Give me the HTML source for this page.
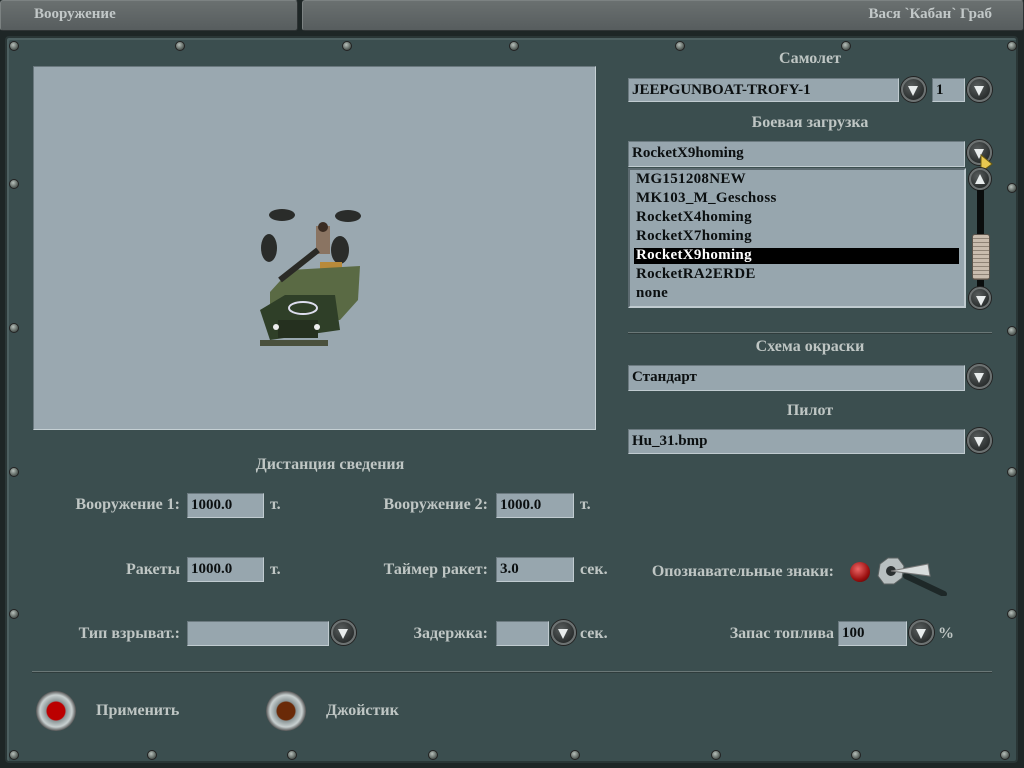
<!DOCTYPE html>
<html><head><meta charset="utf-8">
<style>
*{margin:0;padding:0;box-sizing:border-box}
body{width:1024px;height:768px;background:#1e2626;position:relative;overflow:hidden;font-family:"Liberation Serif","Noto Serif CJK SC",serif}
.a{position:absolute}
.tab{position:absolute;top:0;height:31px;background:linear-gradient(#6a7070,#575d5e);border:1px solid #7c8282;border-bottom-color:#2e3334;border-right-color:#2e3334;border-radius:3px}
.tt{color:#c2c8c8;font-size:15px;font-weight:bold;top:6px}
.panel{left:5px;top:36px;width:1013px;height:727px;background:#3b4e4f;border:2px solid #2a3636;border-radius:4px;box-shadow:inset 2px 2px 0 #4d6061}
.lbl{position:absolute;color:#bfc6c4;font-size:16px;font-weight:bold;white-space:nowrap}
.c{text-align:center;width:300px}
.inp{position:absolute;background:#97a6ae;border:1px solid #c0cbd0;border-top-color:#6c7a80;border-left-color:#6c7a80;color:#0b0f10;font-size:15px;font-weight:bold;padding:1px 3px;white-space:nowrap;line-height:20px}
.btn{position:absolute;width:25px;height:25px;border-radius:50%;background:radial-gradient(circle at 40% 35%,#5a5f5f,#2b2f2f 70%);border:2px solid #6d7272;box-shadow:0 0 0 1px #222}
.btn:after{content:"";position:absolute;left:5px;top:7px;border-left:5.5px solid transparent;border-right:5.5px solid transparent;border-top:10px solid #e8ecec}
.btn.up:after{border-top:none;border-bottom:10px solid #e8ecec;top:4px;left:4px}
.scr{position:absolute;width:10px;height:10px;border-radius:50%;background:radial-gradient(circle at 40% 35%,#b7c0bb,#5d6661 60%,#2f3633);border:1px solid #222}
.line{position:absolute;height:2px;background:#6a7777;border-bottom:1px solid #2f3c3c}
.li{position:absolute;left:636px;font-size:15px;font-weight:bold;color:#0b0f10;letter-spacing:.3px;line-height:19px}
</style></head><body>
<div class="tab" style="left:0;width:298px"></div>
<div class="tab" style="left:302px;width:722px"></div>
<div class="a tt" style="left:34px">Вооружение</div>
<div class="a tt" style="right:32px">Вася `Кабан` Граб</div>

<div class="a panel"></div>
<div class="scr" style="left:9px;top:41px"></div>
<div class="scr" style="left:175px;top:41px"></div>
<div class="scr" style="left:342px;top:41px"></div>
<div class="scr" style="left:509px;top:41px"></div>
<div class="scr" style="left:675px;top:41px"></div>
<div class="scr" style="left:841px;top:41px"></div>
<div class="scr" style="left:1007px;top:41px"></div>
<div class="scr" style="left:9px;top:179px"></div>
<div class="scr" style="left:9px;top:323px"></div>
<div class="scr" style="left:9px;top:467px"></div>
<div class="scr" style="left:9px;top:609px"></div>
<div class="scr" style="left:1007px;top:183px"></div>
<div class="scr" style="left:1007px;top:326px"></div>
<div class="scr" style="left:1007px;top:467px"></div>
<div class="scr" style="left:1007px;top:609px"></div>
<div class="scr" style="left:9px;top:750px"></div>
<div class="scr" style="left:147px;top:750px"></div>
<div class="scr" style="left:287px;top:750px"></div>
<div class="scr" style="left:428px;top:750px"></div>
<div class="scr" style="left:570px;top:750px"></div>
<div class="scr" style="left:711px;top:750px"></div>
<div class="scr" style="left:851px;top:750px"></div>
<div class="scr" style="left:1000px;top:750px"></div>

<div class="a" style="left:33px;top:66px;width:563px;height:364px;background:#9aa8b0;border:1px solid #c5d0d4;border-top-color:#6a787e;border-left-color:#6a787e"></div>
<svg class="a" style="left:240px;top:200px" width="130" height="155" viewBox="0 0 130 155">
<ellipse cx="42" cy="15" rx="13" ry="6" fill="#2a2c2a"/>
<ellipse cx="108" cy="16" rx="13" ry="6" fill="#2a2c2a"/>
<ellipse cx="29" cy="48" rx="8" ry="14" fill="#2a2c2a"/>
<ellipse cx="100" cy="50" rx="9" ry="14" fill="#2a2c2a"/>
<rect x="76" y="26" width="14" height="28" fill="#8a7462"/>
<circle cx="83" cy="27" r="5" fill="#3a2c22"/>
<rect x="80" y="62" width="22" height="22" fill="#b88a3a"/>
<path d="M30 92 L50 70 L120 66 L118 100 L100 120 L30 120 Z" fill="#5a6a44"/>
<path d="M20 110 L45 95 L95 95 L100 130 L30 140 Z" fill="#2f3f28"/>
<ellipse cx="63" cy="108" rx="14" ry="6" fill="none" stroke="#dde" stroke-width="2"/>
<rect x="38" y="120" width="40" height="18" fill="#25301f"/>
<circle cx="36" cy="127" r="3" fill="#eee"/><circle cx="77" cy="127" r="3" fill="#eee"/>
<rect x="20" y="140" width="68" height="6" fill="#4a503c"/>
<path d="M40 80 L78 50" stroke="#2a2a26" stroke-width="6"/>
</svg>

<div class="lbl c" style="left:660px;top:50px">Самолет</div>
<div class="inp" style="left:628px;top:78px;width:271px;height:24px">JEEPGUNBOAT-TROFY-1</div>
<div class="btn" style="left:901px;top:77px"></div>
<div class="inp" style="left:932px;top:78px;width:33px;height:24px">1</div>
<div class="btn" style="left:967px;top:77px"></div>

<div class="lbl c" style="left:660px;top:114px">Боевая загрузка</div>
<div class="inp" style="left:628px;top:141px;width:337px;height:26px">RocketX9homing</div>
<div class="btn" style="left:967px;top:140px"></div>
<svg class="a" style="left:980px;top:154px" width="14" height="20"><path d="M1 1 L1 18 L12 10 Z" fill="#e8c850" stroke="#6a5a10"/></svg>

<div class="a" style="left:628px;top:168px;width:338px;height:140px;background:#97a6ae;border:2px solid #5c6a70;border-right-color:#c0cbd0;border-bottom-color:#c0cbd0"></div>
<div class="a" style="left:634px;top:248px;width:325px;height:16px;background:#000"></div>
<div class="li" style="top:170px">MG151208NEW</div>
<div class="li" style="top:189px">MK103_M_Geschoss</div>
<div class="li" style="top:208px">RocketX4homing</div>
<div class="li" style="top:227px">RocketX7homing</div>
<div class="li" style="top:246px;color:#fff">RocketX9homing</div>
<div class="li" style="top:265px">RocketRA2ERDE</div>
<div class="li" style="top:284px">none</div>
<div class="btn up" style="left:969px;top:168px;width:22px;height:22px"></div>
<div class="a" style="left:977px;top:190px;width:7px;height:98px;background:#0a0d0d"></div>
<div class="a" style="left:972px;top:234px;width:18px;height:46px;background:repeating-linear-gradient(#c9bcae 0 3px,#8f8376 3px 4px);border-radius:3px;border:1px solid #5a524a"></div>
<div class="btn" style="left:969px;top:287px;width:22px;height:22px"></div>

<div class="line" style="left:628px;top:332px;width:364px"></div>
<div class="lbl c" style="left:660px;top:338px">Схема окраски</div>
<div class="inp" style="left:628px;top:365px;width:337px;height:26px">Стандарт</div>
<div class="btn" style="left:967px;top:364px"></div>
<div class="lbl c" style="left:660px;top:402px">Пилот</div>
<div class="inp" style="left:628px;top:429px;width:337px;height:25px">Hu_31.bmp</div>
<div class="btn" style="left:967px;top:428px"></div>

<div class="lbl c" style="left:180px;top:456px">Дистанция сведения</div>
<div class="lbl" style="right:844px;top:496px">Вооружение 1:</div>
<div class="inp" style="left:187px;top:493px;width:77px;height:25px">1000.0</div>
<div class="lbl" style="left:270px;top:496px">т.</div>
<div class="lbl" style="right:536px;top:496px">Вооружение 2:</div>
<div class="inp" style="left:496px;top:493px;width:78px;height:25px">1000.0</div>
<div class="lbl" style="left:580px;top:496px">т.</div>

<div class="lbl" style="right:844px;top:561px">Ракеты</div>
<div class="inp" style="left:187px;top:557px;width:77px;height:25px">1000.0</div>
<div class="lbl" style="left:270px;top:561px">т.</div>
<div class="lbl" style="right:536px;top:561px">Таймер ракет:</div>
<div class="inp" style="left:496px;top:557px;width:78px;height:25px">3.0</div>
<div class="lbl" style="left:580px;top:561px">сек.</div>

<div class="lbl" style="right:844px;top:625px">Тип взрыват.:</div>
<div class="inp" style="left:187px;top:621px;width:142px;height:25px"></div>
<div class="btn" style="left:331px;top:620px"></div>
<div class="lbl" style="right:536px;top:625px">Задержка:</div>
<div class="inp" style="left:496px;top:621px;width:53px;height:25px"></div>
<div class="btn" style="left:551px;top:620px"></div>
<div class="lbl" style="left:580px;top:625px">сек.</div>

<div class="lbl" style="right:190px;top:563px">Опознавательные знаки:</div>
<div class="a" style="left:850px;top:562px;width:20px;height:20px;border-radius:50%;background:radial-gradient(circle at 40% 35%,#e66,#9a1010 60%,#400)"></div>
<svg class="a" style="left:876px;top:556px" width="72" height="40"><path d="M30 20 L68 38" stroke="#1e2828" stroke-width="6" stroke-linecap="round"/><polygon points="4,8 12,2 22,2 28,10 26,22 18,28 8,28 2,20" fill="#b8bfc0" stroke="#5a6060"/><circle cx="15" cy="15" r="5" fill="#2a2f30"/><path d="M15 15 L52 8 L54 20 Z" fill="#d8dcdc" stroke="#777"/></svg>
<div class="lbl" style="right:190px;top:625px">Запас топлива</div>
<div class="inp" style="left:838px;top:621px;width:69px;height:25px">100</div>
<div class="btn" style="left:909px;top:620px"></div>
<div class="lbl" style="left:938px;top:625px">%</div>

<div class="line" style="left:32px;top:671px;width:960px"></div>
<div class="a" style="left:36px;top:691px;width:40px;height:40px;border-radius:50%;background:radial-gradient(circle,#b00 0 9px,#8a9596 10px,#c8d0d0 16px,#555 20px)"></div>
<div class="lbl" style="left:96px;top:702px">Применить</div>
<div class="a" style="left:266px;top:691px;width:40px;height:40px;border-radius:50%;background:radial-gradient(circle,#6a2a08 0 9px,#8a9596 10px,#c8d0d0 16px,#555 20px)"></div>
<div class="lbl" style="left:326px;top:702px">Джойстик</div>
</body></html>
